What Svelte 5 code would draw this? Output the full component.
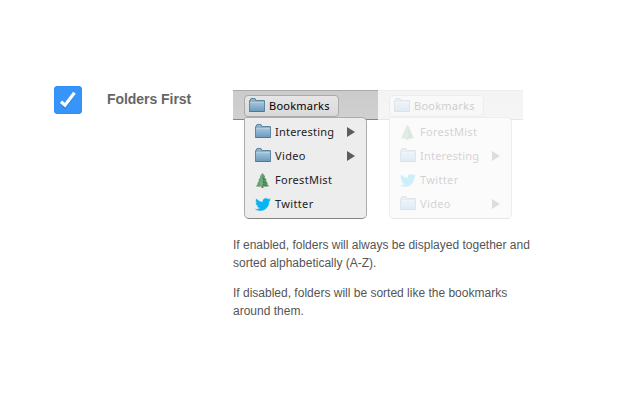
<script>
  const previews = [
    { faded: false, items: ['Interesting', 'Video', 'ForestMist', 'Twitter'] },
    { faded: true, items: ['ForestMist', 'Interesting', 'Twitter', 'Video'] }
  ];
  const icons = { ForestMist: 'tree', Twitter: 'bird' };
  const isFolder = (name) => !icons[name];
</script>

{#snippet icon(name)}
  <svg class="icon" width="16" height="16" viewBox="0 0 16 16" aria-hidden="true">
    {#if icons[name] === 'tree'}
      <path d="M6.6 12.5h1.8V16H6.6z" fill="#77665b" />
      <path d="M7.5 1 10.2 4.6 9.4 5l2.4 3.3-1 .3 2.2 2.9-1 .3 2.2 2.4-3.6.6-3.2-.6-3.2.6-3.4-.6 2.3-2.4-1-.3 2.2-2.9-1-.3L5.6 5l-.8-.4z" fill="#5b9a68" />
      <path d="M7.3 1.5 5.5 5 7.5 4.7 4.3 8.6 7.5 8 3.3 11.6 7.5 11.2 2 14 7.5 13z" fill="#9dc5a0" opacity=".55" />
      <path d="M7.5 4.5 10.6 8 8 7.6zM8 8.4l4 3-4-.3zM8 11.8l5 2.2-5-.6z" fill="#2f6e46" opacity=".6" />
    {:else if icons[name] === 'bird'}
      <path transform="translate(.3 .8) scale(.64)" fill="#08b5f2" stroke="#08b5f2" stroke-width=".4" d="M23.953 4.57a10 10 0 01-2.825.775 4.958 4.958 0 002.163-2.723c-.951.555-2.005.959-3.127 1.184a4.92 4.92 0 00-8.384 4.482C7.69 8.095 4.067 6.13 1.64 3.162a4.822 4.822 0 00-.666 2.475c0 1.71.87 3.213 2.188 4.096a4.904 4.904 0 01-2.228-.616v.06a4.923 4.923 0 003.946 4.827 4.996 4.996 0 01-2.212.085 4.936 4.936 0 004.604 3.417 9.867 9.867 0 01-6.102 2.105c-.39 0-.779-.023-1.17-.067a13.995 13.995 0 007.557 2.209c9.053 0 13.998-7.496 13.998-13.985 0-.21 0-.42-.015-.63A9.935 9.935 0 0024 4.59z" />
    {:else}
      <defs>
        <linearGradient id="folder" x1="0" y1="0" x2="0" y2="1">
          <stop offset="0" stop-color="#a6c5dc" />
          <stop offset="1" stop-color="#6d9cc0" />
        </linearGradient>
      </defs>
      <path d="M.5 13.5v-11h1V1l.5-.5h4l.5.5v1.5h9v11z" fill="#8fb2ca" stroke="#5f87a4" />
      <path d="M1 4h14v9H1z" fill="url(#folder)" />
      <path d="M1 4.5h14" stroke="#b5cfe1" />
      <path d="M.5 13.5h15" stroke="#507692" />
    {/if}
  </svg>
{/snippet}

<main>
  <div class="check">
    <svg width="28" height="28" viewBox="0 0 28 28" aria-hidden="true">
      <path d="m7 17.2 4 3.6 9.3-13" fill="none" stroke="#1872d0" stroke-width="3.2" opacity=".5" />
      <path d="m7 15.8 4 3.4 9.5-12.4" fill="none" stroke="#fff" stroke-width="3.3" />
    </svg>
  </div>
  <h2>Folders First</h2>
  <section>
    <div class="previews">
      {#each previews as preview}
        <div class="preview" class:faded={preview.faded}>
          <div class="bar">
            <div class="button">{@render icon('Bookmarks')}<span class="bookmarks">Bookmarks</span></div>
          </div>
          <div class="menu">
            {#each preview.items as name}
              <div class="item">
                {@render icon(name)}<span class={name.toLowerCase()}>{name}</span>
                {#if isFolder(name)}
                  <svg class="arrow" width="8" height="10" viewBox="0 0 8 10" aria-hidden="true"><path d="M0 0 8 5 0 10z" fill="#5c5c5c" /></svg>
                {/if}
              </div>
            {/each}
          </div>
        </div>
      {/each}
    </div>
    <p>If enabled, folders will always be displayed together and sorted alphabetically (A-Z).</p>
    <p>If disabled, folders will be sorted like the bookmarks around them.</p>
  </section>
</main>

<style>
  :global(body) { background: #fff; }
  main {
    box-sizing: border-box;
    width: 640px;
    height: 400px;
    padding: 86px 0 0 54px;
    display: flex;
    align-items: flex-start;
    overflow: hidden;
    font-family: "Liberation Sans", Arial, sans-serif;
    color: #555;
  }
  .check {
    width: 28px;
    height: 28px;
    flex: none;
    border-radius: 4px;
    background: #3794fb;
    box-shadow: inset 0 0 0 1px #2f8ff8;
  }
  .check svg { display: block; }
  h2 {
    margin: 4px 0 0 25px;
    width: 101px;
    flex: none;
    font-size: 14px;
    line-height: 18px;
    letter-spacing: -.05px;
    white-space: nowrap;
    color: #666;
  }
  section { flex: none; width: 305px; padding-top: 4px; margin-left: 25px; }
  .previews { display: flex; margin-bottom: 17px; }
  .preview {
    width: 145px;
    flex: none;
    font: 11px/24px "Noto Sans", "Open Sans", sans-serif;
    color: #222;
  }
  .faded { opacity: .2; }
  .bar {
    box-sizing: border-box;
    height: 30px;
    border-top: 1px solid #aaa;
    border-bottom: 1px solid #858585;
    background: linear-gradient(#cbcbcb, #d0d0d0);
    padding: 4px 0 0 11px;
  }
  .button {
    box-sizing: border-box;
    width: 95px;
    height: 22px;
    border: 1px solid #aaa;
    border-radius: 4px;
    background: linear-gradient(#e6e6e6, #d9d9d9);
    display: flex;
    align-items: center;
    padding-left: 4px;
    color: #000;
  }
  .icon { display: block; flex: none; }
  .button span, .item span { margin-left: 4px; white-space: nowrap; }
  .menu {
    position: relative;
    box-sizing: border-box;
    width: 123px;
    height: 102px;
    margin: -3px 0 0 11px;
    padding: 2px 11px 2px 10px;
    border: 1px solid #adadad;
    border-bottom-color: #858585;
    border-radius: 2px 5px 5px 5px;
    background: #ededed;
  }
  .item { display: flex; align-items: center; height: 24px; }
  .arrow { margin-left: auto; display: block; }
  .bookmarks { letter-spacing: .25px; }
  .interesting { letter-spacing: .22px; }
  .video { letter-spacing: .35px; }
  .twitter { letter-spacing: .35px; }
  .forestmist { letter-spacing: .3px; }
  p {
    margin: 0 0 12px;
    font-size: 12px;
    line-height: 18px;
  }
</style>
